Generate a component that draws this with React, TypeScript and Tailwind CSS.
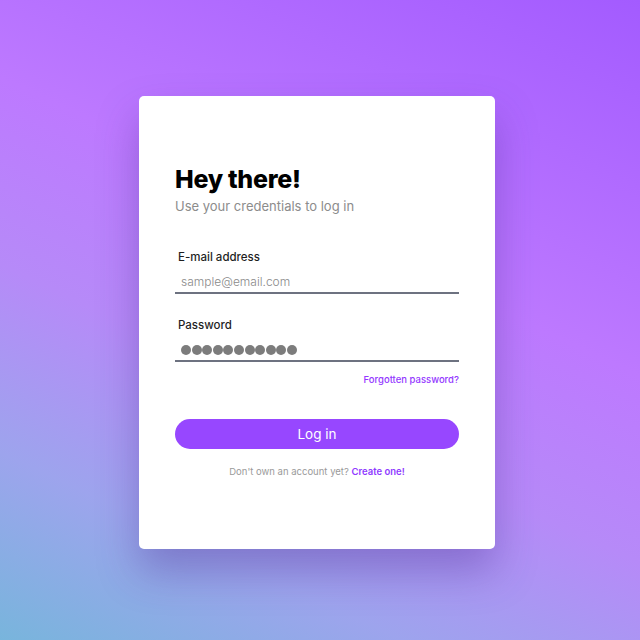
const dots = Array.from({ length: 11 });

export default function App() {
  return (
    <div
      className="min-h-screen w-full pt-[96px] pl-[139px] bg-[linear-gradient(25deg,#78b5dc_0%,#9da4ed_20%,#b68af8_40%,#bd79ff_60%,#a35bff_100%)]"
      style={{ fontFamily: "Inter, 'Noto Sans', sans-serif" }}
    >
      <div className="w-[356px] h-[453px] bg-white rounded-[5px] px-[36px] pt-[67px] shadow-[0_22px_40px_rgba(70,40,140,0.35)]">
        <h1 className="text-[25px] leading-[32px] font-extrabold text-black tracking-[-0.3px]">
          Hey there!
        </h1>
        <p className="mt-[1px] text-[13px] leading-[20px] text-[#8c8c8c]">
          Use your credentials to log in
        </p>

        <label className="block mt-[33px] pl-[3px] text-[11.5px] leading-[16px] font-medium text-[#1f1f1f]">
          E-mail address
        </label>
        <input
          type="email"
          placeholder="sample@email.com"
          className="mt-[2px] block w-full h-[27px] px-[6px] pt-[4px] border-b-2 border-[#6d7280] outline-none text-[12px] font-light text-[#555] placeholder:text-[#8a8a8a]"
        />

        <label className="block mt-[23px] pl-[3px] text-[11.5px] leading-[16px] font-medium text-[#1f1f1f]">
          Password
        </label>
        <div className="mt-[3px] flex items-center gap-[0.6px] w-full h-[26px] px-[6px] pt-[4px] border-b-2 border-[#6d7280]">
          {dots.map((_, i) => (
            <span key={i} className="w-[10px] h-[10px] rounded-full bg-[#7c7c7c]" />
          ))}
        </div>

        <div className="mt-[11px] text-right text-[9.5px] leading-[14px] font-medium text-[#9438ff]">
          Forgotten password?
        </div>

        <button className="mt-[32px] w-full h-[30px] rounded-full bg-[#9747ff] text-white text-[13.5px] font-normal">
          Log in
        </button>

        <p className="mt-[16px] text-center text-[9.5px] leading-[14px] text-[#9a9a9a]">
          Don't own an account yet?{" "}
          <span className="font-semibold text-[#8f3bff]">Create one!</span>
        </p>
      </div>
    </div>
  );
}
